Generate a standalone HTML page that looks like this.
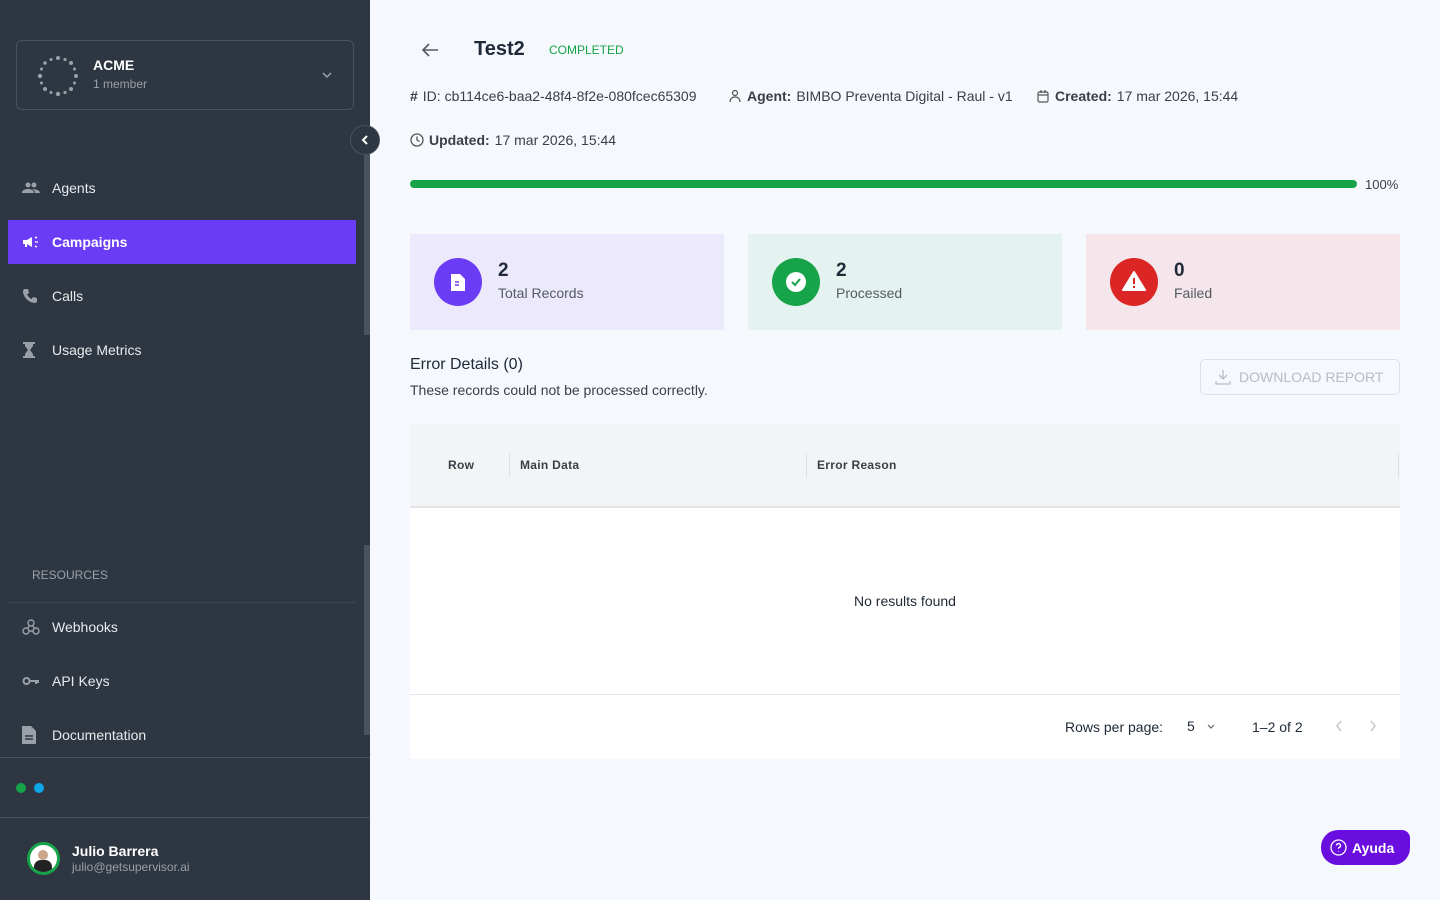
<!DOCTYPE html>
<html><head><meta charset="utf-8"><style>
*{box-sizing:border-box;margin:0;padding:0}
body{width:1440px;height:900px;overflow:hidden;background:#f5f8fc;font-family:"Liberation Sans",sans-serif;position:relative}
.sb{position:absolute;left:0;top:0;width:370px;height:900px;background:#2e3641;color:#fff}
.org{position:absolute;left:16px;top:40px;width:338px;height:70px;border:1px solid #4a525d;border-radius:6px}
.nav{position:absolute;left:8px;width:348px;height:44px;display:flex;align-items:center;font-size:14px;color:#e8eaed}
.nav svg{position:absolute;left:14px}
.nav span{position:absolute;left:44px}
.main{position:absolute;left:410px;width:990px}
.meta{font-size:14px;color:#3a3f47;position:absolute;display:flex;align-items:center;gap:5px}
.meta b{color:#3a3f47}
.card{position:absolute;top:234px;width:314px;height:96px}
.card .ic{position:absolute;left:24px;top:24px;width:48px;height:48px;border-radius:50%}
.card .n{position:absolute;left:88px;top:260px}
</style></head><body>
<div class="sb">
 <div class="org">
  <svg style="position:absolute;left:20px;top:14px" width="42" height="42" viewBox="0 0 42 42">
   <g fill="#9aa0a8">
   <circle cx="21" cy="3" r="2"/><circle cx="28" cy="4.5" r="1.6"/><circle cx="34" cy="8" r="2"/><circle cx="37.5" cy="14" r="1.5"/><circle cx="39" cy="21" r="2"/><circle cx="37.5" cy="28" r="1.5"/><circle cx="34" cy="34" r="2"/><circle cx="28" cy="37.5" r="1.6"/><circle cx="21" cy="39" r="2.2"/><circle cx="14" cy="37.5" r="1.5"/><circle cx="8" cy="34" r="2"/><circle cx="4.5" cy="28" r="1.5"/><circle cx="3" cy="21" r="2.2"/><circle cx="4.5" cy="14" r="1.5"/><circle cx="8" cy="8" r="1.8"/><circle cx="14" cy="4.5" r="1.5"/></g></svg>
  <div style="position:absolute;left:76px;top:16px;font-weight:bold;font-size:14px">ACME</div>
  <div style="position:absolute;left:76px;top:36px;font-size:12px;color:#9aa0a8">1 member</div>
  <svg style="position:absolute;left:304px;top:29px" width="12" height="10" viewBox="0 0 12 10"><path d="M2 3l4 4 4-4" stroke="#9aa0a8" stroke-width="1.5" fill="none"/></svg>
 </div>
 <div style="position:absolute;left:364px;top:150px;width:6px;height:185px;background:#4a525d"></div>
 <div style="position:absolute;left:364px;top:545px;width:6px;height:190px;background:#4a525d"></div>
 <div class="nav" style="top:166px"><svg width="18" height="14" viewBox="0 0 18 14" fill="#9aa0a8"><circle cx="6" cy="4" r="2.5"/><circle cx="12" cy="4" r="2.5"/><path d="M0 12c0-3 3-4 6-4s6 1 6 4zM10 8c3 0 8 1 8 4h-5c0-2-1-3-3-4z"/></svg><span>Agents</span></div>
 <div class="nav" style="top:220px;background:#6b3cf6;font-weight:bold;color:#fff"><svg width="18" height="14" viewBox="0 0 18 14" fill="#fff"><path d="M1 5h4l5-3v10l-5-3H1zM3 9h2v3H3z"/><path d="M13 3l2-1M13 7h3M13 11l2 1" stroke="#fff" stroke-width="1.3"/></svg><span>Campaigns</span></div>
 <div class="nav" style="top:274px"><svg width="16" height="16" viewBox="0 0 16 16" fill="#9aa0a8"><path d="M3 1l3 0 1 4-2 1.5c1 2 2.5 3.5 4.5 4.5L11 9l4 1v3c0 1-1 2-2 2C7 15 1 9 1 3c0-1 1-2 2-2z"/></svg><span>Calls</span></div>
 <div class="nav" style="top:328px"><svg width="14" height="18" viewBox="0 0 14 18" fill="#9aa0a8"><path d="M1 1h12v2H11v2l-3 4 3 4v2h2v2H1v-2h2v-2l3-4-3-4V3H1z"/></svg><span>Usage Metrics</span></div>
 <div style="position:absolute;left:32px;top:568px;font-size:12px;color:#9aa0a8">RESOURCES</div>
 <div style="position:absolute;left:8px;top:602px;width:348px;height:1px;background:#3c444f"></div>
 <div class="nav" style="top:605px"><svg width="18" height="18" viewBox="0 0 18 18" fill="none" stroke="#9aa0a8" stroke-width="1.4"><circle cx="9" cy="5" r="3"/><circle cx="4" cy="13" r="3"/><circle cx="14" cy="13" r="3"/><path d="M7.5 7.5L5 11M10.5 7.5L13 11M7 13h4"/></svg><span>Webhooks</span></div>
 <div class="nav" style="top:659px"><svg width="18" height="10" viewBox="0 0 18 10" fill="none" stroke="#9aa0a8" stroke-width="2"><circle cx="4.5" cy="5" r="3"/><path d="M8 5h9M14 5v3M16 5v2"/></svg><span>API Keys</span></div>
 <div class="nav" style="top:713px"><svg width="14" height="18" viewBox="0 0 14 18" fill="#9aa0a8"><path d="M0 0h9l5 5v13H0z"/><path d="M3 10h8M3 13h8" stroke="#2e3641" stroke-width="1.5"/></svg><span>Documentation</span></div>
 <div style="position:absolute;left:0;top:757px;width:370px;height:1px;background:#4a525d"></div>
 <div style="position:absolute;left:16px;top:783px;width:10px;height:10px;border-radius:50%;background:#16a34a"></div>
 <div style="position:absolute;left:34px;top:783px;width:10px;height:10px;border-radius:50%;background:#0ea5e9"></div>
 <div style="position:absolute;left:0;top:817px;width:370px;height:1px;background:#4a525d"></div>
 <div style="position:absolute;left:27px;top:842px;width:33px;height:33px;border-radius:50%;background:#fff;border:3px solid #16a34a;overflow:hidden"><div style="position:absolute;left:8px;top:5px;width:10px;height:10px;border-radius:50%;background:#c9a58a"></div><div style="position:absolute;left:4px;top:15px;width:18px;height:14px;border-radius:7px 7px 0 0;background:#222"></div></div>
 <div style="position:absolute;left:72px;top:843px;font-weight:bold;font-size:14px">Julio Barrera</div>
 <div style="position:absolute;left:72px;top:860px;font-size:12px;color:#9aa0a8">julio@getsupervisor.ai</div>
</div>
<div style="position:absolute;left:350px;top:125px;width:30px;height:30px;border-radius:50%;background:#2e3641;border:1px solid #4a525d"><svg style="position:absolute;left:9px;top:8px" width="10" height="12" viewBox="0 0 10 12"><path d="M7 2L3 6l4 4" stroke="#fff" stroke-width="2" fill="none"/></svg></div>

<svg style="position:absolute;left:420px;top:41px" width="20" height="18" viewBox="0 0 20 18"><path d="M18 9H3M9 3L3 9l6 6" stroke="#555b63" stroke-width="1.6" fill="none"/></svg>
<div style="position:absolute;left:474px;top:38px;font-size:20px;font-weight:bold;color:#1f2937">Test2</div>
<div style="position:absolute;left:549px;top:43px;font-size:12px;color:#16a34a">COMPLETED</div>
<div class="meta" style="left:410px;top:88px"><span style="font-weight:bold">#</span> ID: cb114ce6-baa2-48f4-8f2e-080fcec65309</div>
<div class="meta" style="left:728px;top:88px"><svg width="14" height="14" viewBox="0 0 14 14" fill="none" stroke="#555" stroke-width="1.2"><circle cx="7" cy="4" r="2.5"/><path d="M2 13c0-3 2-5 5-5s5 2 5 5"/></svg><b>Agent:</b> BIMBO Preventa Digital - Raul - v1</div>
<div class="meta" style="left:1036px;top:88px"><svg width="14" height="14" viewBox="0 0 14 14" fill="none" stroke="#555" stroke-width="1.2"><rect x="2" y="3" width="10" height="10" rx="1.5"/><path d="M2 6h10M5 1v3M9 1v3"/></svg><b>Created:</b> 17 mar 2026, 15:44</div>
<div class="meta" style="left:410px;top:132px"><svg width="14" height="14" viewBox="0 0 14 14" fill="none" stroke="#555" stroke-width="1.3"><circle cx="7" cy="7" r="6"/><path d="M7 3.5V7l2.5 1.5"/></svg><b>Updated:</b> 17 mar 2026, 15:44</div>
<div style="position:absolute;left:410px;top:180px;width:947px;height:8px;border-radius:4px;background:#16a34a"></div>
<div style="position:absolute;left:1365px;top:177px;font-size:13px;color:#3a3f47">100%</div>

<div class="card" style="left:410px;background:#ebe9fb"><div class="ic" style="background:#6b3cf6"><svg style="position:absolute;left:17px;top:15px" width="14" height="18" viewBox="0 0 14 18"><path d="M0 1h9l5 5v12H0z" fill="#fff"/><path d="M4 9h4M4 12h4" stroke="#6b3cf6" stroke-width="1.5"/></svg></div><div style="position:absolute;left:88px;top:26px;font-size:19px;font-weight:bold;color:#1f2937">2</div><div style="position:absolute;left:88px;top:51px;font-size:14px;color:#555b63">Total Records</div></div>
<div class="card" style="left:748px;background:#e4f3ef"><div class="ic" style="background:#16a34a"><div style="position:absolute;left:14px;top:14px;width:20px;height:20px;border-radius:50%;background:#fff"></div><svg style="position:absolute;left:18px;top:18px" width="12" height="12" viewBox="0 0 12 12"><path d="M2 6l3 3 5-6" stroke="#16a34a" stroke-width="2" fill="none"/></svg></div><div style="position:absolute;left:88px;top:26px;font-size:19px;font-weight:bold;color:#1f2937">2</div><div style="position:absolute;left:88px;top:51px;font-size:14px;color:#555b63">Processed</div></div>
<div class="card" style="left:1086px;background:#f4e6ea"><div class="ic" style="background:#dc2626"><svg style="position:absolute;left:12px;top:12px" width="24" height="22" viewBox="0 0 24 22"><path d="M12 2L23 20H1z" fill="#fff" stroke="#fff" stroke-linejoin="round" stroke-width="2"/><path d="M12 8v6M12 16v2" stroke="#dc2626" stroke-width="2"/></svg></div><div style="position:absolute;left:88px;top:26px;font-size:19px;font-weight:bold;color:#1f2937">0</div><div style="position:absolute;left:88px;top:51px;font-size:14px;color:#555b63">Failed</div></div>

<div style="position:absolute;left:410px;top:356px;font-size:16px;color:#1f2937">Error Details (0)</div>
<div style="position:absolute;left:410px;top:382px;font-size:14px;color:#3a3f47">These records could not be processed correctly.</div>
<div style="position:absolute;left:1200px;top:359px;width:200px;height:36px;border:1px solid #dde1e6;border-radius:5px;font-size:14px;color:#b8bdc4;display:flex;align-items:center;padding-left:38px">DOWNLOAD REPORT<svg style="position:absolute;left:14px;top:9px" width="16" height="16" viewBox="0 0 16 16" fill="none" stroke="#b8bdc4" stroke-width="1.3"><path d="M8 1v9M4 6l4 4 4-4M1 12v3h14v-3"/></svg></div>

<div style="position:absolute;left:410px;top:424px;width:990px;height:335px;background:#fff">
 <div style="height:84px;background:#f3f4f5;border-bottom:2px solid #e2e4e7;position:relative;font-size:12px;font-weight:bold;color:#3a3f47;letter-spacing:.3px">
  <div style="position:absolute;left:38px;top:34px">Row</div>
  <div style="position:absolute;left:99px;top:29px;width:1px;height:24px;background:#dde0e3"></div>
  <div style="position:absolute;left:110px;top:34px">Main Data</div>
  <div style="position:absolute;left:396px;top:29px;width:1px;height:24px;background:#dde0e3"></div>
  <div style="position:absolute;left:407px;top:34px">Error Reason</div>
  <div style="position:absolute;left:988px;top:29px;width:1px;height:24px;background:#dde0e3"></div>
 </div>
 <div style="position:absolute;left:0;top:169px;width:990px;text-align:center;font-size:14px;color:#1f2937">No results found</div>
 <div style="position:absolute;left:0;top:270px;width:990px;height:1px;background:#e2e4e7"></div>
 <div style="position:absolute;left:655px;top:295px;font-size:14px;color:#1f2937">Rows per page:</div>
 <div style="position:absolute;left:777px;top:294px;font-size:14px;color:#1f2937">5</div>
 <svg style="position:absolute;left:796px;top:299px" width="10" height="8" viewBox="0 0 10 8"><path d="M2 2l3 3 3-3" stroke="#666" stroke-width="1.2" fill="none"/></svg>
 <div style="position:absolute;left:842px;top:295px;font-size:14px;color:#1f2937">1–2 of 2</div>
 <svg style="position:absolute;left:924px;top:295px" width="10" height="14" viewBox="0 0 10 14"><path d="M7 2L3 7l4 5" stroke="#c4c7cc" stroke-width="1.5" fill="none"/></svg>
 <svg style="position:absolute;left:958px;top:295px" width="10" height="14" viewBox="0 0 10 14"><path d="M3 2l4 5-4 5" stroke="#c4c7cc" stroke-width="1.5" fill="none"/></svg>
</div>

<div style="position:absolute;left:1321px;top:830px;width:89px;height:35px;background:#6a0ee0;border-radius:17px 8px 17px 17px;color:#fff;font-weight:bold;font-size:14px;display:flex;align-items:center;padding-left:31px">Ayuda<svg style="position:absolute;left:9px;top:9px" width="17" height="17" viewBox="0 0 17 17" fill="none" stroke="#fff" stroke-width="1.3"><circle cx="8.5" cy="8.5" r="7.5"/><path d="M6.5 6.5a2 2 0 1 1 2.5 2c-.5.2-.5.6-.5 1.2M8.5 12v.5"/></svg></div>
</body></html>
